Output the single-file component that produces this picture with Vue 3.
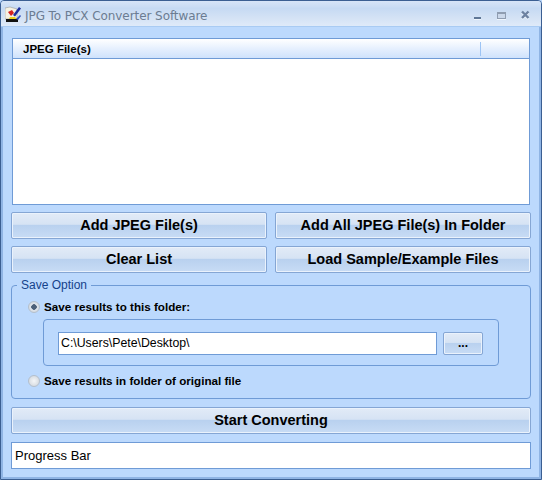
<script setup>
const rows = [
  [{ label: 'Add JPEG File(s)' }, { label: 'Add All JPEG File(s) In Folder' }],
  [{ label: 'Clear List' }, { label: 'Load Sample/Example Files' }],
]
</script>

<template>
  <div class="window">
    <header class="titlebar">
      <svg class="app-icon" width="18" height="18" viewBox="0 0 18 18">
        <path d="M0 3l5-1 7 2v10H0z" fill="#f6f1e2" stroke="#8a8a8a" stroke-width=".5" />
        <path d="M1 14h12v3H1z" fill="#111" />
        <path d="M3 7l4-2 2 3-3 3z" fill="#d42020" />
        <path d="M5 12h5l2 2H4z" fill="#e8d020" />
        <path d="M8 10l6-8 2 1.500-6 8z" fill="#1c2c9c" />
        <path d="M11 14l4-4 1 1-3 4z" fill="#3050c0" />
      </svg>
      <span class="title">JPG To PCX Converter Software</span>
      <svg class="controls" width="60" height="16" viewBox="0 0 60 16">
        <rect x="0" y="9" width="7" height="2" fill="#5f7796" />
        <rect x="0" y="11" width="7" height="1" fill="#eef5fd" />
        <rect x="23" y="4" width="9" height="7" fill="#cbd8ea" />
        <rect x="23" y="4" width="9" height="2" fill="#8f9db1" />
        <rect x="23" y="4" width="1" height="7" fill="#8f9db1" />
        <rect x="31" y="4" width="1" height="7" fill="#8f9db1" />
        <rect x="23" y="10" width="9" height="1" fill="#8f9db1" />
        <rect x="23" y="11" width="9" height="1" fill="#eef5fd" />
        <path d="M48 4.500l6.500 6.500M54.500 4.500l-6.500 6.500" stroke="#eef5fd" stroke-width="2.400" fill="none" />
        <path d="M48 3.500l6.500 6.500M54.500 3.500l-6.500 6.500" stroke="#6d82a1" stroke-width="2.400" fill="none" />
      </svg>
    </header>

    <main class="content">
      <section class="list">
        <div class="list-head">
          <span class="list-col">JPEG File(s)</span>
          <span class="list-end"></span>
        </div>
      </section>

      <div v-for="(row, i) in rows" :key="i" class="btn-row">
        <button v-for="b in row" :key="b.label" class="btn">{{ b.label }}</button>
      </div>

      <fieldset class="group">
        <legend>Save Option</legend>
        <label class="radio-row">
          <span class="radio checked"></span>
          <span class="radio-text">Save results to this folder:</span>
        </label>
        <div class="folder-box">
          <div class="path">C:\Users\Pete\Desktop\</div>
          <button class="btn browse">...</button>
        </div>
        <label class="radio-row">
          <span class="radio"></span>
          <span class="radio-text">Save results in folder of original file</span>
        </label>
      </fieldset>

      <button class="btn start">Start Converting</button>
      <div class="progress">Progress Bar</div>
    </main>
  </div>
</template>

<style>
html, body { margin: 0; padding: 0; background: #bcd9fd; }
</style>

<style scoped>
.window {
  box-sizing: border-box;
  width: 542px;
  height: 480px;
  background: #bcd9fd;
  border: 1px solid #3b5f92;
  border-radius: 4px 4px 0 0;
  overflow: hidden;
  font-family: "Liberation Sans", Arial, sans-serif;
  font-size: 12px;
  color: #000;
  display: flex;
  flex-direction: column;
}
.titlebar {
  height: 26px;
  flex: none;
  box-sizing: border-box;
  display: flex;
  align-items: center;
  padding: 4px 0 0 4px;
  background: linear-gradient(#d7e5f7 0, #c6daf3 30%, #d5e3f5 70%, #dfeaf9 100%);
  border-bottom: 1px solid #a9cbf3;
}
.app-icon { flex: none; margin-top: -3px; }
.title {
  margin-left: 2px;
  color: #6b7c92;
  font-family: "DejaVu Sans", sans-serif;
  font-size: 12px;
  letter-spacing: -0.07px;
  white-space: nowrap;
}
.controls {
  flex: none;
  align-self: flex-start;
  margin: 3px 7px 0 auto;
}
.content {
  flex: 1;
  min-height: 0;
  display: flex;
  flex-direction: column;
  padding: 11px 0 0 8px;
  border: 2px solid #8fb4e4;
  border-top: 0;
}
.list {
  box-sizing: border-box;
  flex: none;
  width: 518px;
  height: 167px;
  margin: 0 0 7px 1px;
  background: #fff;
  border: 1px solid #6f9bd6;
}
.list-head {
  height: 20px;
  box-sizing: border-box;
  display: flex;
  align-items: center;
  background: linear-gradient(#fff, #e6f0fe 50%, #cfe2fc);
  border-bottom: 1px solid #6f9bd6;
  font-weight: bold;
  font-size: 11.500px;
}
.list-col {
  flex: none;
  width: 468px;
  padding-left: 10px;
  box-sizing: border-box;
  border-right: 1px solid #9cc4f5;
  height: 14px;
  line-height: 14px;
}
.list-end { flex: 1; }
.btn-row {
  display: flex;
  flex: none;
  gap: 8px;
  margin-bottom: 7px;
}
.btn-row + .btn-row { margin-bottom: 5px; }
.btn {
  box-sizing: border-box;
  height: 27px;
  padding: 0 0 2px;
  border: 1px solid #85a6d4;
  border-radius: 2px;
  background: linear-gradient(#e2ebf7 0, #d6e3f4 45%, #b9d1ef 50%, #c8dcf5 100%);
  box-shadow: inset 0 0 0 1px #eaf2fc;
  font-family: "Liberation Sans", Arial, sans-serif;
  font-weight: bold;
  font-size: 14.500px;
  color: #000;
}
.btn-row .btn { width: 256px; flex: none; }
.group {
  box-sizing: border-box;
  flex: none;
  width: 520px;
  height: 121px;
  margin: 0 0 8px 0;
  padding: 8px 0 0 16px;
  border: 1px solid #6f9bd6;
  border-radius: 4px;
}
.group legend {
  padding: 0 4px;
  margin-left: -11px;
  color: #15428b;
  font-size: 12px;
  line-height: 14px;
}
.radio-row {
  display: flex;
  align-items: center;
  gap: 4px;
  height: 14px;
  font-weight: bold;
  font-size: 11.650px;
  white-space: nowrap;
}
.radio-text { margin-bottom: 2px; }
.radio {
  box-sizing: border-box;
  width: 12px;
  height: 12px;
  border-radius: 50%;
  border: 1px solid #b4bfcc;
  background: radial-gradient(#f4f6f8, #cdd3da);
  flex: none;
}
.radio.checked { background: radial-gradient(circle, #4d6078 0 2.500px, #dfe4ea 3px, #cbd2da); }
.folder-box {
  box-sizing: border-box;
  width: 456px;
  height: 47px;
  margin: 5px 0 8px 15px;
  display: flex;
  align-items: center;
  padding: 2px 0 0 14px;
  border: 1px solid #6f9bd6;
  border-radius: 4px;
}
.path {
  box-sizing: border-box;
  width: 379px;
  height: 23px;
  line-height: 21px;
  padding-left: 2px;
  background: #fff;
  border: 1px solid #6f9bd6;
  font-size: 12.300px;
}
.browse {
  flex: none;
  width: 40px;
  height: 23px;
  margin-left: 6px;
  font-size: 12px;
}
.start {
  flex: none;
  width: 520px;
  height: 27px;
}
.progress {
  box-sizing: border-box;
  flex: none;
  width: 520px;
  height: 27px;
  margin-top: 8px;
  line-height: 25px;
  padding-left: 3px;
  background: #fff;
  border: 1px solid #6f9bd6;
  font-size: 13px;
}
</style>
